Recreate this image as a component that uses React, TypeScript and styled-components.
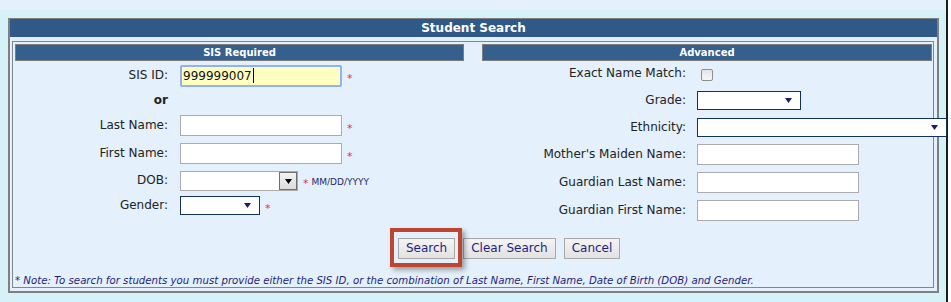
import React from 'react';
import styled, { createGlobalStyle } from 'styled-components';

const GlobalStyle = createGlobalStyle`
  body {
    margin: 0;
    font-family: "DejaVu Sans", Verdana, sans-serif;
    background: #ffffff;
  }
`;

const Page = styled.div`
  width: 946px;
  min-height: 302px;
  background: #d6f2f8;
  border-right: 2px solid #1c1c1c;
`;

const TopBand = styled.div`
  height: 10px;
  background: #e4f1fc;
`;

const Main = styled.div`
  padding: 8px 0 0 8px;
`;

const Panel = styled.div`
  width: 931px;
  box-sizing: border-box;
  border: 2px solid #808080;
  border-top-width: 1px;
  background: #e4f0fb;
`;

const PanelHeader = styled.div`
  height: 18px;
  line-height: 18px;
  background: #2f5a88;
  color: #ffffff;
  font-size: 12px;
  font-weight: bold;
  text-align: center;
`;

const PanelBody = styled.div`
  padding: 4px 3px 3px 2px;
`;

const InnerBox = styled.div`
  border: 1px solid #858585;
  padding: 2px 1px 0 2px;
`;

const Columns = styled.div`
  display: grid;
  grid-template-columns: 449px 450px;
  column-gap: 18px;
  align-items: start;
`;

const SectionHeader = styled.div`
  height: 15px;
  line-height: 15px;
  border: 1px solid #7c7c7c;
  background: #35608e;
  color: #ffffff;
  font-size: 10px;
  font-weight: bold;
  text-align: center;
`;

const FieldRow = styled.div<{ h: number; labelWidth: number; gap: number }>`
  height: ${p => p.h}px;
  display: grid;
  grid-template-columns: ${p => p.labelWidth}px auto;
  column-gap: ${p => p.gap}px;
  align-items: center;
`;

const Label = styled.div<{ bold?: boolean }>`
  text-align: right;
  font-size: 12px;
  color: #222222;
  font-weight: ${p => (p.bold ? 'bold' : 'normal')};
  white-space: nowrap;
  margin-top: -2px;
`;

const Control = styled.div`
  display: flex;
  align-items: center;
`;

const TextBox = styled.div<{ w: number }>`
  width: ${p => p.w}px;
  height: 21px;
  box-sizing: border-box;
  border: 1px solid #ababab;
  background: #ffffff;
`;

const FocusBox = styled.div`
  width: 162px;
  height: 22px;
  box-sizing: border-box;
  border: 2px solid #91b2ee;
  border-radius: 2px;
  background: #ffffc2;
  font-size: 12px;
  line-height: 18px;
  padding-left: 1px;
  color: #111111;
  display: flex;
  align-items: center;
`;

const Caret = styled.span`
  display: inline-block;
  width: 1px;
  height: 15px;
  background: #000000;
  margin-left: 1px;
`;

const DateBox = styled.div`
  width: 118px;
  height: 20px;
  box-sizing: border-box;
  border: 1px solid #ababab;
  background: #ffffff;
  display: flex;
  justify-content: flex-end;
`;

const DateButton = styled.div`
  width: 18px;
  box-sizing: border-box;
  border: 1px solid #6e6e6e;
  background: linear-gradient(#f2f2f2, #dcdcdc);
  display: flex;
  align-items: center;
  justify-content: center;
`;

const Select = styled.div<{ w: number }>`
  width: ${p => p.w}px;
  height: 19px;
  box-sizing: border-box;
  border: 1px solid #10305e;
  background: #ffffff;
  display: flex;
  align-items: center;
  justify-content: flex-end;
  padding-right: 8px;
`;

const Asterisk = styled.span`
  color: #e8323c;
  font-size: 11px;
  margin-left: 5px;
  padding-top: 5px;
`;

const Hint = styled.span`
  color: #2a2a66;
  font-size: 9px;
  margin-left: 3px;
  padding-top: 2px;
`;

const CheckBox = styled.div`
  width: 12px;
  height: 12px;
  box-sizing: border-box;
  border: 1px solid #8e8e8e;
  border-radius: 2px;
  background: linear-gradient(#e6e6e6, #f6f6f6);
  margin-left: 4px;
  margin-top: 1px;
`;

const ButtonRow = styled.div`
  margin-top: 14px;
  padding-left: 383px;
  display: flex;
  gap: 8px;
`;

const Button = styled.div`
  height: 21px;
  box-sizing: border-box;
  padding: 0 7px;
  border: 1px solid #a8a8a8;
  background: linear-gradient(#f4f4f4, #e2e2e2);
  color: #1e1e86;
  font-size: 12px;
  line-height: 19px;
  white-space: nowrap;
`;

const Highlight = styled.div`
  position: relative;
  display: flex;
`;

const HighlightFrame = styled.div`
  position: absolute;
  left: -8px;
  right: -7px;
  top: -10px;
  bottom: -8px;
  border: 4px solid #be4630;
  box-shadow: 3px 3px 5px rgba(0, 0, 0, 0.35);
  pointer-events: none;
`;

const Note = styled.div`
  margin-top: 15px;
  height: 13px;
  line-height: 13px;
  font-size: 10.2px;
  font-style: italic;
  color: #1f1f7a;
  white-space: nowrap;
`;

const Arrow: React.FC<{ color: string }> = ({ color }) => (
  <svg width="7" height="5" viewBox="0 0 7 5">
    <path d="M0 0 H7 L3.5 5 Z" fill={color} />
  </svg>
);

const Required = () => <Asterisk>*</Asterisk>;

const leftRow = { labelWidth: 153, gap: 12 };
const rightRow = { labelWidth: 204, gap: 11 };

export default function App() {
  return (
    <>
      <GlobalStyle />
      <Page>
        <TopBand />
        <Main>
          <Panel>
            <PanelHeader>Student Search</PanelHeader>
            <PanelBody>
              <InnerBox>
                <Columns>
                  <div>
                    <SectionHeader>SIS Required</SectionHeader>
                    <FieldRow h={29} {...leftRow}>
                      <Label>SIS ID:</Label>
                      <Control>
                        <FocusBox>
                          999999007<Caret />
                        </FocusBox>
                        <Required />
                      </Control>
                    </FieldRow>
                    <FieldRow h={22} {...leftRow}>
                      <Label bold>or</Label>
                      <Control />
                    </FieldRow>
                    <FieldRow h={27} {...leftRow}>
                      <Label>Last Name:</Label>
                      <Control>
                        <TextBox w={162} />
                        <Required />
                      </Control>
                    </FieldRow>
                    <FieldRow h={29} {...leftRow}>
                      <Label>First Name:</Label>
                      <Control>
                        <TextBox w={162} />
                        <Required />
                      </Control>
                    </FieldRow>
                    <FieldRow h={26} {...leftRow}>
                      <Label>DOB:</Label>
                      <Control>
                        <DateBox>
                          <DateButton>
                            <Arrow color="#000000" />
                          </DateButton>
                        </DateBox>
                        <Required />
                        <Hint>MM/DD/YYYY</Hint>
                      </Control>
                    </FieldRow>
                    <FieldRow h={23} {...leftRow}>
                      <Label>Gender:</Label>
                      <Control>
                        <Select w={80}>
                          <Arrow color="#1c1c6e" />
                        </Select>
                        <Required />
                      </Control>
                    </FieldRow>
                  </div>
                  <div>
                    <SectionHeader>Advanced</SectionHeader>
                    <FieldRow h={26} {...rightRow}>
                      <Label>Exact Name Match:</Label>
                      <Control>
                        <CheckBox />
                      </Control>
                    </FieldRow>
                    <FieldRow h={27} {...rightRow}>
                      <Label>Grade:</Label>
                      <Control>
                        <Select w={104}>
                          <Arrow color="#1c1c6e" />
                        </Select>
                      </Control>
                    </FieldRow>
                    <FieldRow h={27} {...rightRow}>
                      <Label>Ethnicity:</Label>
                      <Control>
                        <Select w={250}>
                          <Arrow color="#1c1c6e" />
                        </Select>
                      </Control>
                    </FieldRow>
                    <FieldRow h={27} {...rightRow}>
                      <Label>Mother's Maiden Name:</Label>
                      <Control>
                        <TextBox w={162} />
                      </Control>
                    </FieldRow>
                    <FieldRow h={29} {...rightRow}>
                      <Label>Guardian Last Name:</Label>
                      <Control>
                        <TextBox w={162} />
                      </Control>
                    </FieldRow>
                    <FieldRow h={27} {...rightRow}>
                      <Label>Guardian First Name:</Label>
                      <Control>
                        <TextBox w={162} />
                      </Control>
                    </FieldRow>
                  </div>
                </Columns>
                <ButtonRow>
                  <Highlight>
                    <Button>Search</Button>
                    <HighlightFrame />
                  </Highlight>
                  <Button>Clear Search</Button>
                  <Button>Cancel</Button>
                </ButtonRow>
                <Note>
                  * Note: To search for students you must provide either the SIS ID, or the combination of Last Name, First Name, Date of Birth (DOB) and Gender.
                </Note>
              </InnerBox>
            </PanelBody>
          </Panel>
        </Main>
      </Page>
    </>
  );
}
